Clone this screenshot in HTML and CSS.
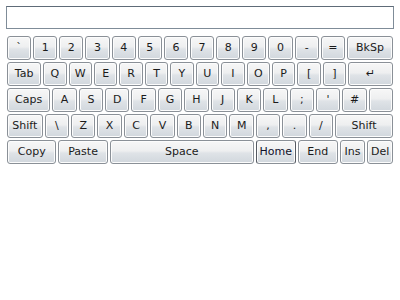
FILE: index.html
```html
<!DOCTYPE html>
<html lang="en">

<head>
    <meta charset="UTF-8">
    <meta name="viewport" content="width=device-width, initial-scale=1.0">
    <title>Keyboard</title>
    <link rel="stylesheet" href="styles.css">
</head>

<body>
    <div class="keyboard-panel">
        <input type="text" class="entry">
        <div class="keys">
            <div class="row">
                <button class="key">`</button>
                <button class="key">1</button>
                <button class="key">2</button>
                <button class="key">3</button>
                <button class="key">4</button>
                <button class="key">5</button>
                <button class="key">6</button>
                <button class="key">7</button>
                <button class="key">8</button>
                <button class="key">9</button>
                <button class="key">0</button>
                <button class="key">-</button>
                <button class="key">=</button>
                <button class="key w2">BkSp</button>
            </div>
            <div class="row">
                <button class="key w15">Tab</button>
                <button class="key">Q</button>
                <button class="key">W</button>
                <button class="key">E</button>
                <button class="key">R</button>
                <button class="key">T</button>
                <button class="key">Y</button>
                <button class="key">U</button>
                <button class="key">I</button>
                <button class="key">O</button>
                <button class="key">P</button>
                <button class="key">[</button>
                <button class="key">]</button>
                <button class="key w2">&#8629;</button>
            </div>
            <div class="row">
                <button class="key w18">Caps</button>
                <button class="key">A</button>
                <button class="key">S</button>
                <button class="key">D</button>
                <button class="key">F</button>
                <button class="key">G</button>
                <button class="key">H</button>
                <button class="key">J</button>
                <button class="key">K</button>
                <button class="key">L</button>
                <button class="key">;</button>
                <button class="key">'</button>
                <button class="key">#</button>
                <button class="key"></button>
            </div>
            <div class="row">
                <button class="key w15">Shift</button>
                <button class="key">\</button>
                <button class="key">Z</button>
                <button class="key">X</button>
                <button class="key">C</button>
                <button class="key">V</button>
                <button class="key">B</button>
                <button class="key">N</button>
                <button class="key">M</button>
                <button class="key">,</button>
                <button class="key">.</button>
                <button class="key">/</button>
                <button class="key w25">Shift</button>
            </div>
            <div class="row">
                <button class="key w2">Copy</button>
                <button class="key w2">Paste</button>
                <button class="key w6">Space</button>
                <button class="key w16 focused">Home</button>
                <button class="key w16">End</button>
                <button class="key">Ins</button>
                <button class="key">Del</button>
            </div>
        </div>
    </div>
</body>

</html>
```

FILE: styles.css
```css
body {
    margin: 0;
    background-color: #ffffff;
    font-family: "DejaVu Sans", Verdana, sans-serif;
}

.keyboard-panel {
    width: 388px;
    padding: 6px;
}

.entry {
    display: block;
    box-sizing: border-box;
    width: 388px;
    height: 23px;
    margin: 0 0 6px 0;
    border: 1px solid #7f8c98;
    border-top-color: #5e6b78;
    background-color: white;
    outline: none;
}

.row {
    display: flex;
    height: 26px;
}

.key {
    flex: 1 1 0;
    min-width: 0;
    margin: 1px;
    padding: 0;
    border: 1px solid #8a9097;
    border-radius: 3px;
    /* borde interior blanco */
    box-shadow: inset 0 0 0 1px #fcfcfc;
    background: linear-gradient(to bottom, #f7f7f7 0%, #eeeff0 45%, #dfe3e7 55%, #d1d7dd 100%);
    color: #1b1b1b;
    font-family: "DejaVu Sans", Verdana, sans-serif;
    font-size: 11px;
    line-height: 22px;
    text-align: center;
    white-space: nowrap;
    overflow: hidden;
}

.key.focused {
    border-color: #8a9097 #555a62;
    color: #10102a;
}

.w15 {
    flex-grow: 1.5;
}

.w16 {
    flex-grow: 1.6;
}

.w18 {
    flex-grow: 1.85;
}

.w2 {
    flex-grow: 2;
}

.w25 {
    flex-grow: 2.5;
}

.w6 {
    flex-grow: 6;
}
```
